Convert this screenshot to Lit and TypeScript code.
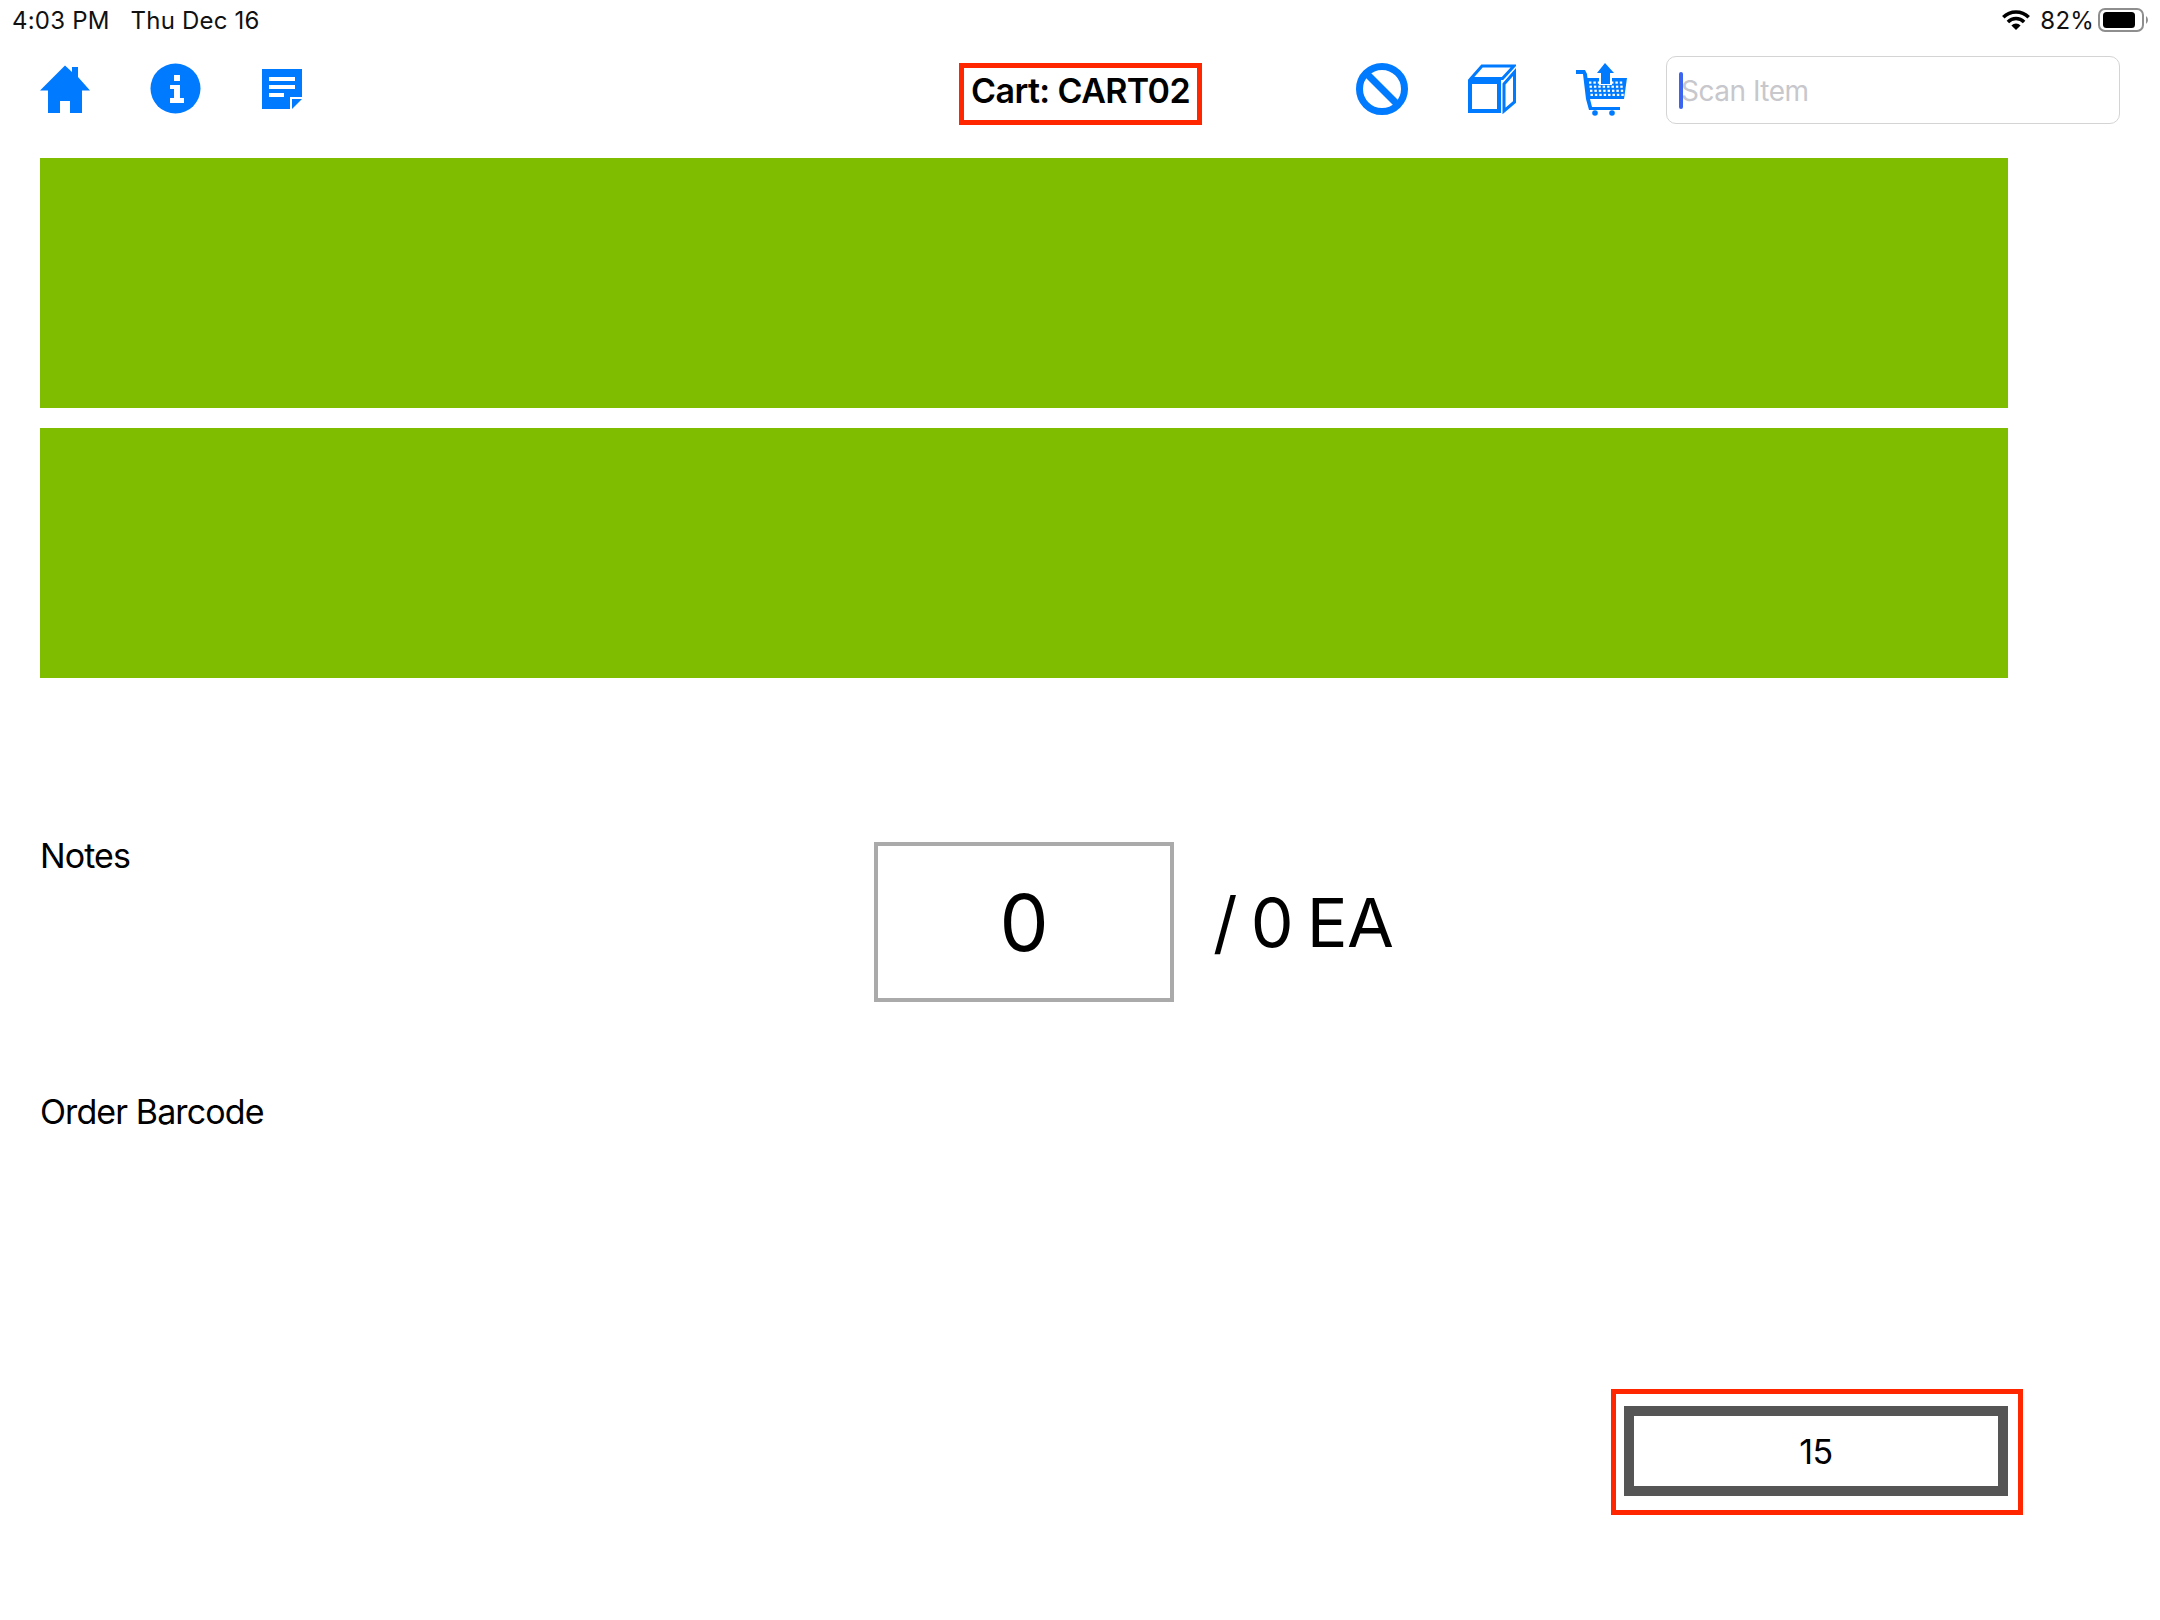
import { LitElement, html, css, svg } from "lit";
import { customElement } from "lit/decorators.js";

const dots = () => {
  const out = [];
  for (let r = 0; r < 4; r++) {
    for (let c = 0; c < 8; c++) {
      out.push(svg`<rect x=${13 + c * 4.4 + r * 0.5} y=${18.5 + r * 4.1} width="2.4" height="2.2" fill="#fff"/>`);
    }
  }
  return out;
};

@customElement("app-root")
export class AppRoot extends LitElement {
  static styles = css`
    :host { display: block; width: 2160px; height: 1620px; background: #fff; overflow: hidden; font-family: Inter, "Liberation Sans", sans-serif; color: #000; }
    .status { height: 40px; display: flex; align-items: center; padding: 0 10px 0 12px; font-size: 24px; letter-spacing: 0.2px; color: #111; }
    .date { margin-left: 21px; flex: 1; }
    .pct { margin: 0 4px 0 10px; }
    .toolbar { height: 98px; margin-bottom: 20px; display: flex; align-items: center; padding-left: 40px; }
    .toolbar svg { display: block; flex: none; }
    .i-home { margin-right: 60px; }
    .i-info { margin: -2px 61px 0 0; }
    .i-note { margin-right: 657px; }
    .cart-label { box-sizing: border-box; width: 243px; height: 62px; border: 5px solid #ff2600; padding-bottom: 7px; display: flex; align-items: center; justify-content: center; font-size: 34px; font-weight: 600; letter-spacing: -0.6px; margin: 10px 154px 0 0; white-space: nowrap; }
    .i-block { margin-right: 60px; }
    .i-box { margin-right: 60px; }
    .i-cart { margin-right: 38px; }
    .search { box-sizing: border-box; width: 454px; height: 68px; margin-top: 2px; border: 1.5px solid #d4d4d4; border-radius: 10px; display: flex; align-items: center; padding-left: 12px; padding-top: 1px; font-size: 28px; letter-spacing: -0.5px; color: #c7c7cc; }
    .caret { width: 4px; height: 37px; border-radius: 2px; background: #3b64f0; margin-right: -2px; position: relative; }
    .main { padding: 0 40px; }
    .bars { display: flex; flex-direction: column; gap: 20px; width: 1968px; }
    .bar { height: 250px; background: #7fbd00; }
    .qty-row { margin-top: 158px; display: flex; align-items: flex-start; }
    .label { font-size: 34px; line-height: 40px; letter-spacing: -0.9px; }
    .notes { width: 834px; }
    .qty-box { box-sizing: border-box; width: 300px; height: 160px; margin-top: 6px; border: 4px solid #aaa; display: flex; align-items: center; justify-content: center; font-size: 78px; }
    .qty-unit { margin: 6px 0 0 39px; height: 160px; display: flex; align-items: center; font-size: 68px; letter-spacing: -0.5px; word-spacing: -5px; }
    .barcode { margin-top: 90px; }
    .footer { margin: 257px 0 0 1571px; box-sizing: border-box; width: 412px; height: 126px; border: 5px solid #ff2600; padding: 12px 10px 14px 8px; }
    .count { box-sizing: border-box; height: 90px; border: 10px solid #555; display: flex; align-items: center; justify-content: center; font-size: 34px; font-weight: 400; letter-spacing: -0.6px; }
  `;

  render() {
    return html`
      <div class="status">
        <span>4:03 PM</span><span class="date">Thu Dec 16</span>
        <svg width="28" height="20" viewBox="0 0 28 20">
          <path d="M14 20 L9.400 15.400 A6.500 6.500 0 0 1 18.600 15.400Z" fill="#000"/>
          <path d="M5.900 11.900 A11.500 11.500 0 0 1 22.100 11.900" fill="none" stroke="#000" stroke-width="3.500"/>
          <path d="M1.300 7.300 A18 18 0 0 1 26.700 7.300" fill="none" stroke="#000" stroke-width="3.500"/>
        </svg>
        <span class="pct">82%</span>
        <svg width="52" height="24" viewBox="0 0 52 24">
          <rect x="1" y="1" width="44" height="22" rx="6" fill="none" stroke="#8e8e8e" stroke-width="2"/>
          <rect x="5" y="4" width="32" height="16" rx="3.500" fill="#000"/>
          <path d="M48 8 A5 5 0 0 1 48 16Z" fill="#8e8e8e"/>
        </svg>
      </div>

      <div class="toolbar">
        <svg class="i-home" width="50" height="48" viewBox="0 0 50 48" fill="#007aff">
          <path d="M25 .5 L32 7 V2 H38 V12 L50 25.500 H42 V48 H30 V36 H20 V48 H8 V25.500 H0Z"/>
        </svg>
        <svg class="i-info" width="51" height="51" viewBox="0 0 51 51">
          <circle cx="25.500" cy="25.500" r="25" fill="#007aff"/>
          <path fill="#fff" d="M24 12 H30 V18 H24Z M20 22 H30 V35 H34 V40 H20 V35 H24 V26 H20Z"/>
        </svg>
        <svg class="i-note" width="40" height="40" viewBox="0 0 40 40">
          <rect width="40" height="40" fill="#007aff"/>
          <path fill="#fff" d="M7 8 H33 V12 H7Z M7 16 H33 V20 H7Z M7 24 H22 V28 H7Z M28 28 H40 V40 H28Z"/>
          <path fill="#007aff" d="M30 30 H40 L30 40Z"/>
        </svg>
        <div class="cart-label">Cart: CART02</div>
        <svg class="i-block" width="52" height="52" viewBox="0 0 52 52" fill="none" stroke="#007aff" stroke-width="7">
          <circle cx="26" cy="26" r="22.500"/>
          <path d="M10 10 L42 42"/>
        </svg>
        <svg class="i-box" width="48" height="50" viewBox="0 0 48 50" fill="none" stroke="#007aff">
          <rect x="2" y="18" width="29" height="29" stroke-width="4"/>
          <path stroke-width="3" d="M3 14.500 L14 2 H46 L34.500 14.500Z"/>
          <path stroke-width="3" d="M36 20 L46.500 8 V38 L36 47Z"/>
        </svg>
        <svg class="i-cart" width="52" height="53" viewBox="0 0 52 53" fill="#007aff">
          <path d="M0 7 H9 L11 11 L14 36 L16 44 H44 V47 H13 L10 36 L7 11 H0Z"/>
          <path d="M9 15 H51 L48 36 H13Z"/>
          <path fill="#fff" d="M23 15 H36 V22 H23Z"/>
          ${dots()}
          <path d="M29 0 L38 10 H34 V21 H25 V10 H21Z"/>
          <circle cx="19" cy="50" r="2.800"/><circle cx="36" cy="50" r="2.800"/>
        </svg>
        <div class="search"><span class="caret"></span><span>Scan Item</span></div>
      </div>

      <div class="main">
        <div class="bars"><div class="bar"></div><div class="bar"></div></div>
        <div class="qty-row">
          <div class="label notes">Notes</div>
          <div class="qty-box">0</div>
          <div class="qty-unit">/ 0 EA</div>
        </div>
        <div class="label barcode">Order Barcode</div>
        <div class="footer"><div class="count">15</div></div>
      </div>
    `;
  }
}
